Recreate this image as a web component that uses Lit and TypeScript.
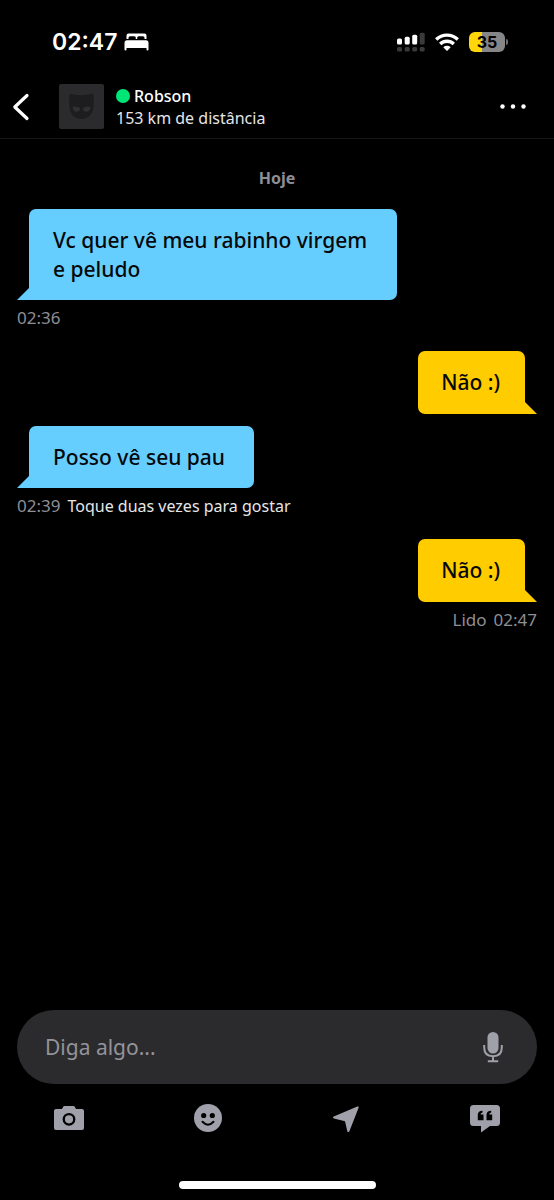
import { LitElement, html, svg, css, nothing } from "lit";
import { customElement, property } from "lit/decorators.js";

interface Message {
  own: boolean;
  text: string;
  time?: string;
  status?: string;
  hint?: string;
}

const messages: Message[] = [
  { own: false, text: "Vc quer vê meu rabinho virgem e peludo", time: "02:36" },
  { own: true, text: "Não :)" },
  { own: false, text: "Posso vê seu pau", time: "02:39", hint: "Toque duas vezes para gostar" },
  { own: true, text: "Não :)", status: "Lido", time: "02:47" },
];

@customElement("status-bar")
class StatusBar extends LitElement {
  @property({ type: Number }) battery = 35;

  static styles = css`
    :host {
      display: flex;
      align-items: center;
      justify-content: space-between;
      height: 67px;
      padding: 8px 46px 0 52px;
      color: #fff;
      font-family: Inter, sans-serif;
    }
    .side { display: flex; align-items: center; }
    .time { font-size: 23px; font-weight: 600; line-height: 28px; }
    .left { gap: 7px; }
    .right { gap: 10px; }
    svg { display: block; }
    .battery { display: flex; align-items: center; gap: 1px; }
    .cell {
      display: flex;
      align-items: center;
      justify-content: center;
      width: 36px;
      height: 20px;
      border-radius: 6px;
      color: #000;
      font-size: 16px;
      font-weight: 700;
      line-height: 20px;
    }
    .tip { width: 2px; height: 6px; border-radius: 0 2px 2px 0; background: #6d6d6f; }
  `;

  render() {
    const fill = `background: linear-gradient(90deg, #ffd60a ${this.battery}%, #868688 ${this.battery}%)`;
    return html`
      <div class="side left">
        <span class="time">02:47</span>
        <svg width="25" height="18" viewBox="0 0 25 18" fill="#fff" aria-hidden="true">
          <path d="M2.500 6V2.500Q2.500 .5 4.500 .5H20.500Q22.500 .5 22.500 2.500V6H20.500V4.800Q20.500 3.300 19 3.300H14.600Q13.200 3.300 13.200 4.800V6H11.800V4.800Q11.800 3.300 10.400 3.300H6Q4.500 3.300 4.500 4.800V6Z" />
          <path d="M3 7.300H22Q24.500 7.300 24.500 10V16.500Q24.500 17.500 23.500 17.500Q22.500 17.500 22.500 16.500V15H2.500V16.500Q2.500 17.500 1.500 17.500Q.5 17.500 .5 16.500V10Q.5 7.300 3 7.300Z" />
        </svg>
      </div>
      <div class="side right">
        <svg width="28" height="20" viewBox="0 0 28 20" aria-hidden="true">
          <g fill="#fff">
            <rect x="0" y="6.500" width="5" height="6" rx="1.500" />
            <rect x="7.700" y="4.800" width="5" height="7.700" rx="1.500" />
            <rect x="15.200" y="2.800" width="5" height="9.700" rx="1.500" />
          </g>
          <g fill="#3a3a3c">
            <rect x="22.700" y=".8" width="5" height="11.700" rx="1.500" />
            <rect x="0" y="15" width="5" height="4.600" rx="1.500" />
            <rect x="7.700" y="15" width="5" height="4.600" rx="1.500" />
            <rect x="15.200" y="15" width="5" height="4.600" rx="1.500" />
            <rect x="22.700" y="15" width="5" height="4.600" rx="1.500" />
          </g>
        </svg>
        <svg width="24" height="18" viewBox="0 0 24 18" aria-hidden="true">
          <g fill="none" stroke="#fff" stroke-width="3.300">
            <path d="M1.200 6.500A15.500 15.500 0 0 1 22.800 6.500" />
            <path d="M5.200 11A9.800 9.800 0 0 1 18.800 11" />
          </g>
          <path d="M8.300 14.200A5.500 5.500 0 0 1 15.700 14.200L12.600 17.400Q12 18 11.400 17.400Z" fill="#fff" />
        </svg>
        <div class="battery">
          <div class="cell" style=${fill}>${this.battery}</div>
          <div class="tip"></div>
        </div>
      </div>
    `;
  }
}

@customElement("chat-header")
class ChatHeader extends LitElement {
  @property() name = "";
  @property() distance = "";

  static styles = css`
    :host {
      display: flex;
      align-items: center;
      height: 63px;
      padding: 0 18px 0 4px;
      border-bottom: 1px solid #161618;
      color: #fff;
    }
    button {
      display: flex;
      align-items: center;
      justify-content: center;
      width: 44px;
      height: 44px;
      padding: 0;
      border: 0;
      background: none;
      color: inherit;
    }
    .back { width: 34px; margin-right: 21px; }
    .avatar { display: block; width: 45px; height: 45px; margin-right: 12px; }
    .who { flex: 1; min-width: 0; padding-top: 1px; }
    .name {
      display: flex;
      align-items: center;
      gap: 4px;
      margin: 0;
      font-size: 16px;
      font-weight: 500;
      line-height: 22px;
    }
    .dot { width: 14px; height: 14px; border-radius: 50%; background: #00e676; }
    .distance { margin: 0; font-size: 16px; line-height: 22px; color: #e6e6e8; }
    .more { width: 46px; }
  `;

  render() {
    return html`
      <button class="back" aria-label="Voltar">
        <svg width="18" height="28" viewBox="0 0 18 28" fill="none" stroke="#fff" stroke-width="3.200" stroke-linecap="round" stroke-linejoin="round">
          <path d="M15 2.500L2.800 14L15 25.500" />
        </svg>
      </button>
      <svg class="avatar" viewBox="0 0 45 45" aria-hidden="true">
        <rect width="45" height="45" rx="2" fill="#2b2b2d" />
        <path d="M10.500 10.500Q11.500 9.300 14 10.300Q22.500 12 31 10.300Q33.500 9.300 34.500 10.500Q35.300 16 34.500 23Q34 28.500 31 31.500Q27.500 35 22.500 35Q17.500 35 14 31.500Q11 28.500 10.500 23Q9.700 16 10.500 10.500Z" fill="#1d1d1f" />
        <path d="M13.500 23Q17 21.500 21 24Q21 27.800 17.500 27.800Q14 27.800 13.500 23ZM31.500 23Q28 21.500 24 24Q24 27.800 27.500 27.800Q31 27.800 31.500 23Z" fill="#303032" />
      </svg>
      <div class="who">
        <h1 class="name"><span class="dot"></span>${this.name}</h1>
        <p class="distance">${this.distance}</p>
      </div>
      <button class="more" aria-label="Mais opções">
        <svg width="28" height="6" viewBox="0 0 28 6" fill="#fff">
          <circle cx="3.500" cy="2.500" r="2.200" />
          <circle cx="14" cy="2.500" r="2.200" />
          <circle cx="24.500" cy="2.500" r="2.200" />
        </svg>
      </button>
    `;
  }
}

@customElement("chat-message")
class ChatMessage extends LitElement {
  @property({ attribute: false }) message!: Message;

  static styles = css`
    :host { display: block; }
    .row { display: flex; align-items: flex-end; color: #66ceff; }
    .row.own { flex-direction: row-reverse; color: #ffcc00; }
    .tail {
      flex: none;
      width: 12px;
      height: 12px;
      background: currentColor;
      clip-path: polygon(100% 0, 100% 100%, 0 100%);
    }
    .own .tail { clip-path: polygon(0 0, 100% 100%, 0 100%); }
    .bubble {
      box-sizing: border-box;
      max-width: 368px;
      margin: 0;
      padding: 17px 29px 16px 24px;
      border-radius: 7px 7px 7px 0;
      background: currentColor;
      font-size: 21px;
      font-weight: 500;
      line-height: 29px;
    }
    .own .bubble { padding: 17px 25px 17px 23px; border-radius: 7px 7px 0 7px; }
    .text { color: #06080a; }
    .meta {
      display: flex;
      gap: 7px;
      margin: 0;
      padding: 6px 0 9px;
      color: #8e8e96;
      font-size: 17px;
      line-height: 24px;
    }
    .meta.own { justify-content: flex-end; }
    .hint { font-size: 16px; color: #e6e6e8; }
  `;

  render() {
    const { own, text, time, status, hint } = this.message;
    const side = own ? "own" : "";
    return html`
      <div class="row ${side}">
        <span class="tail"></span>
        <p class="bubble"><span class="text">${text}</span></p>
      </div>
      ${time
        ? html`<p class="meta ${side}">
            ${status ? html`<span>${status}</span>` : nothing}
            <time>${time}</time>
            ${hint ? html`<span class="hint">${hint}</span>` : nothing}
          </p>`
        : nothing}
    `;
  }
}

const tools = [
  {
    label: "Câmera",
    icon: svg`<path fill-rule="evenodd" d="M3 7H9L10.200 4.800Q10.700 4 11.700 4H20.300Q21.300 4 21.800 4.800L23 7H29Q31 7 31 9V26Q31 28 29 28H3Q1 28 1 26V9Q1 7 3 7ZM16 10.900A6.400 6.400 0 1 0 16 23.700A6.400 6.400 0 1 0 16 10.900ZM16 13.200A4.100 4.100 0 1 1 16 21.400A4.100 4.100 0 1 1 16 13.200Z" />`,
  },
  {
    label: "Figurinhas",
    icon: svg`<circle cx="16" cy="16" r="14" /><g fill="#000"><circle cx="11.700" cy="13.500" r="2.600" /><circle cx="20.300" cy="13.500" r="2.600" /></g><path d="M10.500 19.800Q16 25.500 21.500 19.800" fill="none" stroke="#000" stroke-width="2" stroke-linecap="round" />`,
  },
  {
    label: "Localização",
    icon: svg`<path d="M27.300 4.600Q29.100 4 28.600 5.800L19.400 29.200Q18.300 31 17.300 29.200L15 19.300L4 16.600Q2 15.500 3.800 14.600Z" />`,
  },
  {
    label: "Frases salvas",
    icon: svg`<path d="M4.500 3H27.500Q31 3 31 6.500V20.500Q31 24 27.500 24H21L12 30.500V24H4.500Q1 24 1 20.500V6.500Q1 3 4.500 3Z" /><path fill="#000" d="M8.800 18.300V12.500Q9 9 13.500 8.700V10.400Q11.500 11 11.600 12.600H14.500V18.300ZM17.500 18.300V12.500Q17.700 9 22.200 8.700V10.400Q20.200 11 20.300 12.600H23.200V18.300Z" />`,
  },
];

@customElement("chat-composer")
class ChatComposer extends LitElement {
  static styles = css`
    :host { display: block; }
    .field {
      display: flex;
      align-items: center;
      height: 74px;
      margin: 0 17px;
      padding: 0 22px 0 28px;
      box-sizing: border-box;
      border-radius: 37px;
      background: #2b2b2d;
    }
    input {
      flex: 1;
      min-width: 0;
      padding: 0;
      border: 0;
      outline: 0;
      background: none;
      color: #fff;
      font: inherit;
      font-size: 21px;
      line-height: 32px;
    }
    input::placeholder { color: #93939b; opacity: 1; }
    button {
      display: flex;
      align-items: center;
      justify-content: center;
      height: 44px;
      padding: 0;
      border: 0;
      background: none;
      color: #a0a0ab;
    }
    .mic { width: 44px; }
    .tools { display: grid; grid-template-columns: repeat(4, 1fr); padding-top: 12px; }
  `;

  render() {
    return html`
      <div class="field">
        <input type="text" placeholder="Diga algo..." aria-label="Mensagem" />
        <button class="mic" aria-label="Gravar áudio">
          <svg width="20" height="32" viewBox="0 0 20 32" fill="none" stroke="currentColor" stroke-width="2">
            <rect x="4.500" y="1" width="11" height="21.500" rx="5.500" fill="currentColor" stroke="none" />
            <path d="M1.200 14V16.500Q1.200 25.200 10 25.200Q18.800 25.200 18.800 16.500V14M10 25V30M4.800 30.200H15.200" />
          </svg>
        </button>
      </div>
      <div class="tools">
        ${tools.map(
          (tool) => html`<button aria-label=${tool.label}>
            <svg width="32" height="32" viewBox="0 0 32 32" fill="currentColor">${tool.icon}</svg>
          </button>`
        )}
      </div>
    `;
  }
}

@customElement("app-root")
class AppRoot extends LitElement {
  static styles = css`
    :host {
      display: flex;
      flex-direction: column;
      box-sizing: border-box;
      min-height: 100vh;
      background: #000;
      font-family: "Noto Sans", sans-serif;
    }
    .thread { flex: 1; padding: 27px 17px 12px; }
    .day {
      margin: 0 0 19px;
      color: #8e8e96;
      font-size: 16px;
      font-weight: 700;
      line-height: 24px;
      text-align: center;
    }
    .list { display: grid; gap: 12px; }
    .home {
      width: 197px;
      height: 8px;
      margin: 41px auto 11px;
      border-radius: 4px;
      background: #fff;
    }
  `;

  render() {
    return html`
      <status-bar></status-bar>
      <chat-header name="Robson" distance="153 km de distância"></chat-header>
      <main class="thread">
        <h2 class="day">Hoje</h2>
        <div class="list">
          ${messages.map((m) => html`<chat-message .message=${m}></chat-message>`)}
        </div>
      </main>
      <chat-composer></chat-composer>
      <div class="home"></div>
    `;
  }
}
